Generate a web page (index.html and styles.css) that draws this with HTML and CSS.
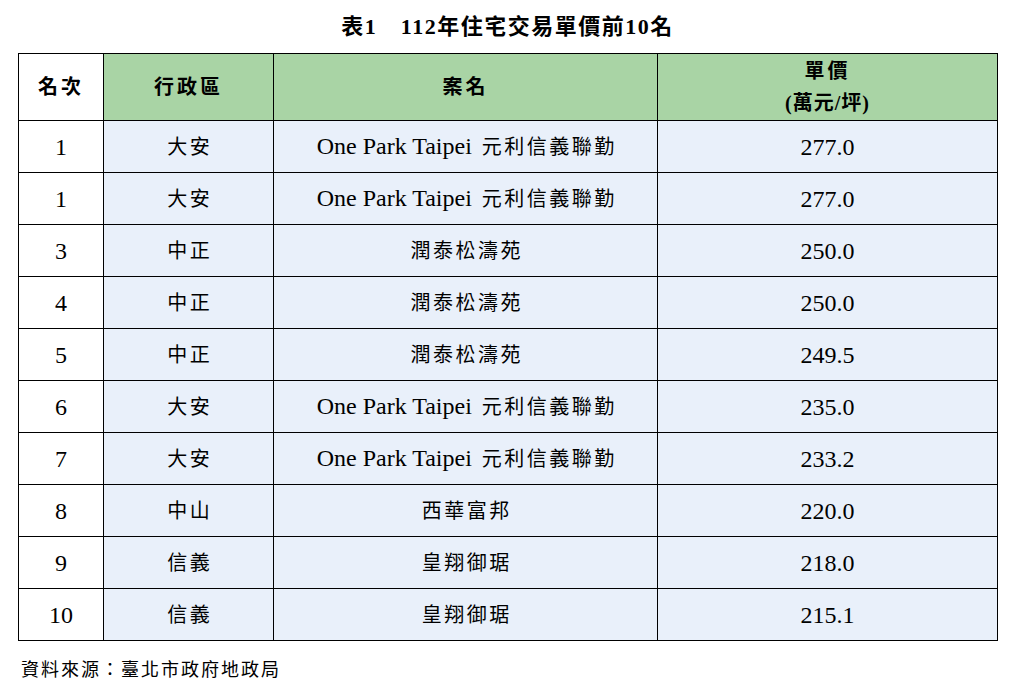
FILE: index.html
```html
<!DOCTYPE html>
<html lang="zh-Hant">
<head>
<meta charset="utf-8">
<title>表1 112年住宅交易單價前10名</title>
<link rel="stylesheet" href="styles.css">
</head>
<body>
<div class="page">
  <h1 class="title">表1　112年住宅交易單價前10名</h1>
  <table class="rank-table">
    <colgroup>
      <col class="c-rank">
      <col class="c-dist">
      <col class="c-name">
      <col class="c-price">
    </colgroup>
    <thead>
      <tr>
        <th class="plain">名次</th>
        <th>行政區</th>
        <th>案名</th>
        <th><span class="th-line">單價</span><span class="th-line">(萬元/坪)</span></th>
      </tr>
    </thead>
    <tbody>
      <tr><td class="plain">1</td><td><span class="zh">大安</span></td><td>One Park Taipei <span class="zh after-latin">元利信義聯勤</span></td><td>277.0</td></tr>
      <tr><td class="plain">1</td><td><span class="zh">大安</span></td><td>One Park Taipei <span class="zh after-latin">元利信義聯勤</span></td><td>277.0</td></tr>
      <tr><td class="plain">3</td><td><span class="zh">中正</span></td><td><span class="zh">潤泰松濤苑</span></td><td>250.0</td></tr>
      <tr><td class="plain">4</td><td><span class="zh">中正</span></td><td><span class="zh">潤泰松濤苑</span></td><td>250.0</td></tr>
      <tr><td class="plain">5</td><td><span class="zh">中正</span></td><td><span class="zh">潤泰松濤苑</span></td><td>249.5</td></tr>
      <tr><td class="plain">6</td><td><span class="zh">大安</span></td><td>One Park Taipei <span class="zh after-latin">元利信義聯勤</span></td><td>235.0</td></tr>
      <tr><td class="plain">7</td><td><span class="zh">大安</span></td><td>One Park Taipei <span class="zh after-latin">元利信義聯勤</span></td><td>233.2</td></tr>
      <tr><td class="plain">8</td><td><span class="zh">中山</span></td><td><span class="zh">西華富邦</span></td><td>220.0</td></tr>
      <tr><td class="plain">9</td><td><span class="zh">信義</span></td><td><span class="zh">皇翔御琚</span></td><td>218.0</td></tr>
      <tr><td class="plain">10</td><td><span class="zh">信義</span></td><td><span class="zh">皇翔御琚</span></td><td>215.1</td></tr>
    </tbody>
  </table>
  <p class="source">資料來源：臺北市政府地政局</p>
</div>
</body>
</html>
```

FILE: styles.css
```css
html, body {
  margin: 0;
  padding: 0;
  background: #ffffff;
}

body {
  font-family: "Liberation Serif", "Noto Sans CJK TC", serif;
  color: #000000;
}

.page {
  padding: 13px 19px 0 18px;
}

.title {
  margin: 0 0 12px 0;
  text-align: center;
  font-size: 22px;
  line-height: 28px;
  font-weight: bold;
  letter-spacing: 1.5px;
}

.rank-table {
  width: 979px;
  border-collapse: collapse;
  table-layout: fixed;
}

.c-rank { width: 85px; }
.c-dist { width: 170px; }
.c-name { width: 384px; }
.c-price { width: 340px; }

.rank-table th,
.rank-table td {
  border: 1px solid #000000;
  padding: 0;
  text-align: center;
  vertical-align: middle;
}

.rank-table th {
  height: 66px;
  background: #a9d4a5;
  font-size: 20px;
  font-weight: bold;
  letter-spacing: 3px;
  line-height: 32px;
}

.rank-table th.plain,
.rank-table td.plain {
  background: #ffffff;
}

.th-line {
  display: block;
}

.th-line + .th-line {
  letter-spacing: 1px;
}

.rank-table td {
  height: 51px;
  background: #e9f0fa;
  font-size: 24px;
  line-height: 28px;
}

.zh {
  font-size: 20px;
  letter-spacing: 2.5px;
  margin-right: -2.5px;
}

.after-latin {
  margin-left: 4px;
}

.source {
  margin: 17px 0 0 3px;
  font-size: 18px;
  line-height: 24px;
  letter-spacing: 2px;
}
```
